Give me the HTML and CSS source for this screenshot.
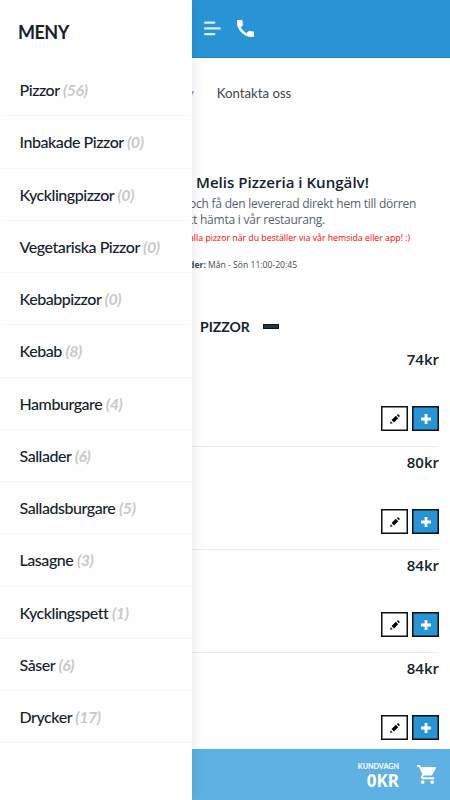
FILE: index.html
```html
<!DOCTYPE html>
<html lang="sv">
<head>
    <meta charset="UTF-8">
    <meta name="viewport" content="width=device-width, initial-scale=1.0">
    <title>Melis Pizzeria</title>
    <link rel="stylesheet" href="styles.css">
</head>
<body>
    <svg class="symbols">
        <symbol id="pencil" viewBox="0 0 10 10">
            <path d="M0.2 9.8 L0.7 7.3 L2.7 9.3 Z M1.6 6 L5.8 1.8 L8.2 4.2 L4 8.4 Z M6.8 1.1 L8 0.1 L9.9 2 L8.9 3.2 Z"/>
        </symbol>
        <symbol id="plus" viewBox="0 0 10 10">
            <path d="M3.6 0h2.8v3.6H10v2.8H6.4V10H3.6V6.4H0V3.6h3.6z"/>
        </symbol>
    </svg>

    <header class="topbar">
        <svg class="icon-menu" viewBox="0 0 17 15">
            <path d="M1.2 1.6h9 M1.2 7.4h14.4 M1.2 13.1h9"/>
        </svg>
        <svg class="icon-phone" viewBox="3 3 18 18">
            <path d="M6.62 10.79c1.44 2.83 3.76 5.14 6.59 6.59l2.2-2.2c.27-.27.67-.36 1.02-.24 1.12.37 2.33.57 3.57.57.55 0 1 .45 1 1V20c0 .55-.45 1-1 1C10.61 21 3 13.39 3 4c0-.55.45-1 1-1h3.5c.55 0 1 .45 1 1 0 1.25.2 2.45.57 3.57.11.35.03.74-.25 1.02l-2.2 2.2z"/>
        </svg>
    </header>

    <nav class="links">
        <a class="active">y</a>
        <a>Kontakta oss</a>
    </nav>

    <section class="intro">
        <h1>Melis Pizzeria i Kungälv!</h1>
        <p class="lead">och få den levererad direkt hem till dörren<br>tt hämta i vår restaurang.</p>
        <p class="offer">alla pizzor när du beställer via vår hemsida eller app! :)</p>
        <p class="hours"><b>der:</b> Mån - Sön 11:00-20:45</p>
    </section>

    <main>
        <h2 class="category">PIZZOR <span class="dash"></span></h2>
        <div class="product">
            <div class="price">74kr</div>
            <div class="buttons">
                <button class="edit"><svg><use href="#pencil"/></svg></button>
                <button class="add"><svg><use href="#plus"/></svg></button>
            </div>
        </div>
        <div class="product">
            <div class="price">80kr</div>
            <div class="buttons">
                <button class="edit"><svg><use href="#pencil"/></svg></button>
                <button class="add"><svg><use href="#plus"/></svg></button>
            </div>
        </div>
        <div class="product">
            <div class="price">84kr</div>
            <div class="buttons">
                <button class="edit"><svg><use href="#pencil"/></svg></button>
                <button class="add"><svg><use href="#plus"/></svg></button>
            </div>
        </div>
        <div class="product">
            <div class="price">84kr</div>
            <div class="buttons">
                <button class="edit"><svg><use href="#pencil"/></svg></button>
                <button class="add"><svg><use href="#plus"/></svg></button>
            </div>
        </div>
    </main>

    <footer class="cart">
        <div class="cart-text">
            <div class="cart-label">KUNDVAGN</div>
            <div class="cart-total">0KR</div>
        </div>
        <svg class="icon-cart" viewBox="1 2 21 20">
            <path d="M7 18c-1.1 0-1.99.9-1.99 2S5.9 22 7 22s2-.9 2-2-.9-2-2-2zM1 2v2h2l3.6 7.59-1.35 2.45c-.16.28-.25.61-.25.96 0 1.1.9 2 2 2h12v-2H7.42c-.14 0-.25-.11-.25-.25l.03-.12.9-1.63h7.45c.75 0 1.41-.41 1.75-1.03l3.58-6.49c.08-.14.12-.31.12-.48 0-.55-.45-1-1-1H5.21l-.94-2H1zm16 16c-1.1 0-1.99.9-1.99 2s.89 2 1.99 2 2-.9 2-2-.9-2-2-2z"/>
        </svg>
    </footer>

    <aside class="drawer">
        <h2>MENY</h2>
        <ul>
            <li>Pizzor <i>(56)</i></li>
            <li>Inbakade Pizzor <i>(0)</i></li>
            <li>Kycklingpizzor <i>(0)</i></li>
            <li>Vegetariska Pizzor <i>(0)</i></li>
            <li>Kebabpizzor <i>(0)</i></li>
            <li>Kebab <i>(8)</i></li>
            <li>Hamburgare <i>(4)</i></li>
            <li>Sallader <i>(6)</i></li>
            <li>Salladsburgare <i>(5)</i></li>
            <li>Lasagne <i>(3)</i></li>
            <li>Kycklingspett <i>(1)</i></li>
            <li>Såser <i>(6)</i></li>
            <li>Drycker <i>(17)</i></li>
        </ul>
    </aside>
</body>
</html>
```
FILE: styles.css
```css
* {
    box-sizing: border-box;
}
body {
    margin: 0;
    height: 800px;
    position: relative;
    overflow: hidden;
    display: flex;
    flex-direction: column;
    background-color: #fff;
    color: #14232d;
    font-family: "Open Sans", sans-serif;
}
h1, h2, p, ul {
    margin: 0;
    padding: 0;
}
.symbols {
    display: none;
}

/* top */
.topbar {
    height: 58px;
    flex: none;
    display: flex;
    align-items: center;
    gap: 16px;
    padding-left: 203.5px;
    background-color: #2994d5;
    border-bottom: 1px solid #1b86c8;
}
.icon-menu {
    width: 17px;
    height: 15px;
    fill: none;
    stroke: #d9edf9;
    stroke-width: 2.4;
    stroke-linecap: round;
}
.icon-phone {
    width: 17px;
    height: 17px;
    fill: #fff;
    stroke: #fff;
    stroke-width: 0.8;
}
.links {
    height: 69px;
    flex: none;
    display: flex;
    align-items: center;
    gap: 23px;
    padding-left: 187px;
    font: 13.2px Lato, sans-serif;
    color: #3c464d;
}
.links .active {
    color: #2994d5;
}

/* intro */
.intro {
    height: 184px;
    flex: none;
    padding-top: 45px;
    padding-left: 189px;
    white-space: nowrap;
}
.intro h1 {
    padding-left: 7px;
    font-size: 15.1px;
    font-weight: 600;
    line-height: 20px;
}
.lead {
    margin-top: 4px;
    font-size: 12px;
    line-height: 15.5px;
    letter-spacing: -0.23px;
    color: #55626a;
}
.offer {
    margin-top: 5px;
    font-size: 8.75px;
    line-height: 12px;
    color: #f00;
}
.hours {
    margin-top: 15px;
    font-size: 8.6px;
    line-height: 12px;
    color: #3f4b53;
}

/* products */
main {
    flex: 1;
    padding: 5px 11px 0 191px;
    overflow: hidden;
}
.category {
    display: flex;
    align-items: center;
    gap: 13px;
    height: 20px;
    margin-bottom: 13px;
    padding-left: 9px;
    font: bold 14px Lato, sans-serif;
}
.dash {
    width: 16px;
    height: 5px;
    background-color: #26343f;
    border: 1px solid #0c1820;
}
.product {
    height: 103px;
    padding-top: 5px;
    border-bottom: 1px solid #ebebeb;
}
.product:nth-child(2) {
    height: 98px;
    padding-top: 0;
}
.price {
    height: 20px;
    margin-bottom: 37px;
    font-size: 15px;
    font-weight: 600;
    line-height: 20px;
    text-align: right;
}
.buttons {
    display: flex;
    justify-content: flex-end;
    gap: 4px;
}
.buttons button {
    display: flex;
    align-items: center;
    justify-content: center;
    width: 27px;
    height: 25px;
    padding: 0;
    border: 1px solid #0b1116;
    box-shadow: inset 0 0 0 0.5px #0b1116;
    background-color: #fff;
}
.buttons .add {
    background-color: #2994d5;
    fill: #fff;
}
.buttons svg {
    width: 10px;
    height: 10px;
}

/* cart */
.cart {
    height: 51px;
    flex: none;
    display: flex;
    align-items: center;
    justify-content: flex-end;
    gap: 18px;
    padding-right: 13px;
    background-color: #5eb1e2;
    color: #fff;
    text-align: right;
}
.cart-text {
    padding-top: 4px;
}
.cart-label {
    font-family: Lato, sans-serif;
    font-size: 7.2px;
    font-weight: bold;
    line-height: 8px;
}
.cart-total {
    font-family: "Noto Sans", sans-serif;
    font-size: 17px;
    font-weight: bold;
    line-height: 19px;
}
.icon-cart {
    width: 20px;
    height: 19px;
    fill: #fff;
}

/* drawer lies over the page */
.drawer {
    position: absolute;
    top: 0;
    left: 0;
    width: 191.5px;
    height: 800px;
    background-color: #fefefe;
    box-shadow: 0 0 12px rgba(0, 0, 0, 0.1);
    font-family: Lato, sans-serif;
}
.drawer h2 {
    height: 64px;
    padding-left: 18px;
    font-size: 18px;
    font-weight: bold;
    line-height: 64px;
    letter-spacing: -0.5px;
}
.drawer ul {
    list-style: none;
    margin: 0 1px;
}
.drawer li {
    height: 52.27px;
    padding-left: 18.5px;
    border-bottom: 1px solid #f6f6f6;
    font-size: 16px;
    font-weight: 500;
    line-height: 52px;
    letter-spacing: -0.45px;
    white-space: nowrap;
}
.drawer i {
    color: #c9c9c9;
    font-weight: bold;
}
```
